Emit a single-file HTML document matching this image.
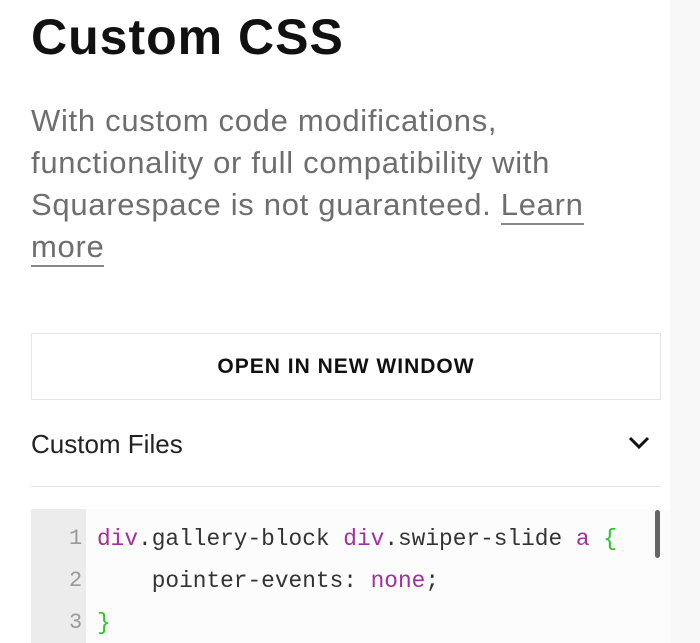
<!DOCTYPE html>
<html><head><style>
body{margin:0;width:700px;height:643px;overflow:hidden;background:#fff;font-family:"Liberation Sans",sans-serif;position:relative}
.side{position:absolute;left:670px;top:0;width:30px;height:643px;background:#f8f8f8}
h1{position:absolute;left:31px;top:8px;margin:0;font-size:50px;font-weight:600;color:#111;letter-spacing:1px}
.p{position:absolute;left:31px;top:100px;width:640px;font-size:31px;line-height:42px;color:#6e6e6e;font-weight:500;letter-spacing:0.7px}
.p u{text-decoration:none;border-bottom:2px solid #888;padding-bottom:1px}
.btn{position:absolute;left:31px;top:333px;width:630px;height:67px;border:1.5px solid #e5e5e5;box-sizing:border-box;text-align:center;line-height:65px;font-size:21px;font-weight:600;letter-spacing:1px;color:#111}
.cf{position:absolute;left:31px;top:429px;font-size:26px;color:#222}
.chev{position:absolute;left:628px;top:435px}
.hr{position:absolute;left:31px;top:486px;width:630px;height:1px;background:#e3e3e3}
.code{position:absolute;left:31px;top:509px;width:638px;height:134px;background:#fcfcfc}
.gut{position:absolute;left:31px;top:509px;width:55px;height:134px;background:#ececec}
.ln{position:absolute;font-family:"Liberation Mono",monospace;font-size:22px;color:#999;left:68px}
.c{position:absolute;font-family:"Liberation Mono",monospace;font-size:22.8px;color:#333;left:97px;white-space:pre}
.k{color:#a0309a}.g{color:#2bc42b}
.sb{position:absolute;left:655px;top:510px;width:5px;height:48px;background:#666;border-radius:3px}
</style></head><body>
<div class="side"></div>
<h1>Custom CSS</h1>
<div class="p">With custom code modifications,<br>functionality or full compatibility with<br>Squarespace is not guaranteed. <u>Learn</u><br><u>more</u></div>
<div class="btn">OPEN IN NEW WINDOW</div>
<div class="cf">Custom Files</div>
<svg class="chev" width="22" height="16" viewBox="0 0 22 16"><path d="M2 3 L11 12 L20 3" fill="none" stroke="#111" stroke-width="3"/></svg>
<div class="hr"></div>
<div class="code"></div><div class="gut"></div>
<div class="ln" style="top:526px;left:69px">1</div>
<div class="ln" style="top:568px;left:69px">2</div>
<div class="ln" style="top:610px;left:69px">3</div>
<div class="c" style="top:526px"><span class="k">div</span>.gallery-block <span class="k">div</span>.swiper-slide <span class="k">a</span> <span class="g">{</span></div>
<div class="c" style="top:568px">    pointer-events: <span class="k">none</span>;</div>
<div class="c" style="top:610px"><span class="g">}</span></div>
<div class="sb"></div>
</body></html>
